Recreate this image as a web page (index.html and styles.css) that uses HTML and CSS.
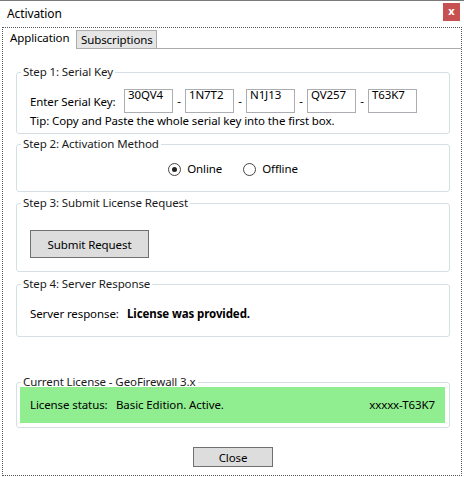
FILE: index.html
```html
<!DOCTYPE html>
<html>
<head>
<meta charset="utf-8">
<link rel="stylesheet" href="styles.css">
</head>
<body>
<div class="window">
  <div class="titlebar">
    <span class="title">Activation</span>
    <span class="close">x</span>
  </div>
  <div class="tabctl">
    <div class="tabs">
      <div class="tab active">Application</div>
      <div class="tab inactive">Subscriptions</div>
      <div class="tabfill"></div>
    </div>
    <div class="panel">
      <fieldset class="group g1">
        <legend>Step 1: Serial Key</legend>
        <div class="body b1">
          <div class="keyrow">
            <span class="keylabel">Enter Serial Key:</span>
            <span class="keybox">30QV4</span><span class="dash">-</span>
            <span class="keybox">1N7T2</span><span class="dash">-</span>
            <span class="keybox">N1J13</span><span class="dash">-</span>
            <span class="keybox">QV257</span><span class="dash">-</span>
            <span class="keybox">T63K7</span>
          </div>
          <div class="line">Tip: Copy and Paste the whole serial key into the first box.</div>
        </div>
      </fieldset>
      <fieldset class="group g2">
        <legend>Step 2: Activation Method</legend>
        <div class="body b2">
          <div class="radios">
            <span class="radio"><span class="circle checked"><span class="dot"></span></span>Online</span>
            <span class="radio"><span class="circle"></span>Offline</span>
          </div>
        </div>
      </fieldset>
      <fieldset class="group g3">
        <legend>Step 3: Submit License Request</legend>
        <div class="body b3">
          <button class="btn submit">Submit Request</button>
        </div>
      </fieldset>
      <fieldset class="group g4">
        <legend>Step 4: Server Response</legend>
        <div class="body b4">
          <div class="line"><span class="resp-label">Server response:</span><b class="resp">License was provided.</b></div>
        </div>
      </fieldset>
      <fieldset class="group g5">
        <legend>Current License - GeoFirewall 3.x</legend>
        <div class="body b5">
          <div class="status">
            <span class="status-label">License status:</span>
            <span class="status-value">Basic Edition. Active.</span>
            <span class="status-key">xxxxx-T63K7</span>
          </div>
        </div>
      </fieldset>
      <div class="footer">
        <button class="btn closebtn">Close</button>
      </div>
    </div>
  </div>
</div>
</body>
</html>
```
FILE: styles.css
```css
* { box-sizing: border-box; }
html, body { margin: 0; padding: 0; background: #fff; }
body {
  font-family: "Noto Sans", "Open Sans", sans-serif;
  font-size: 11.5px;
  letter-spacing: -0.1px;
  line-height: 16px;
  color: #000;
}
.window {
  width: 464px;
  height: 477px;
  border-top: 1px solid #7a7a7a;
  display: flex;
  flex-direction: column;
  background: #fff;
  overflow: hidden;
}
.titlebar {
  height: 26px;
  flex: none;
  display: flex;
  justify-content: space-between;
  align-items: flex-start;
  padding: 0 4px 0 7px;
}
.title { margin-top: 5px; font-size: 12px; }
.close {
  margin-top: 2px;
  width: 17px;
  height: 18px;
  background: #c75050;
  color: #fff;
  font-weight: bold;
  font-size: 11px;
  line-height: 16px;
  text-align: center;
}
.tabctl {
  flex: 1;
  margin: 0 2px 1px 2px;
  border: 1px dotted #555;
  display: flex;
  flex-direction: column;
}
.tabs {
  height: 21px;
  flex: none;
  display: flex;
  align-items: flex-end;
}
.tab {
  height: 21px;
  line-height: 20px;
  white-space: nowrap;
}
.tab.active {
  width: 73px;
  padding-left: 7px;
  background: #fff;
}
.tab.inactive {
  width: 81px;
  height: 19px;
  line-height: 17px;
  padding-left: 4px;
  background: #e5e5e5;
  border: 1px solid #acacac;
}
.tabfill {
  flex: 1;
  height: 1px;
  background: #acacac;
}
.panel {
  flex: 1;
  display: flex;
  flex-direction: column;
  padding: 15px 11px 0 13px;
}
.group {
  margin: 0;
  padding: 0;
  min-width: 0;
  border: 1px solid #d5dfe5;
  border-radius: 3px;
}
.group legend {
  margin-left: 4px;
  padding: 0 2px;
  line-height: 16px;
  color: #1a1a1a;
}
.g2 { margin-top: 2px; }
.g3 { margin-top: 3px; }
.g4 { margin-top: 4px; }
.g5 { margin-top: 37px; }
.body { padding-left: 13px; }
.b1 { padding-top: 9px; padding-bottom: 4px; }
.b2 { padding-top: 9px; padding-bottom: 14px; padding-left: 0; }
.b3 { padding-top: 19px; padding-bottom: 13px; }
.b4 { padding-top: 14px; padding-bottom: 14px; }
.b5 { padding: 0 4px 4px 3px; margin-top: -3px; }
.keyrow {
  display: flex;
  align-items: center;
  height: 24px;
}
.keylabel { width: 94px; padding-top: 1px; }
.keybox {
  width: 49px;
  height: 24px;
  border: 1px solid #abadb3;
  padding: 0 3px;
  line-height: 10px;
}
.dash {
  width: 12px;
  text-align: center;
}
.line { height: 16px; white-space: nowrap; }
.radios {
  display: flex;
  justify-content: center;
  gap: 21px;
  height: 16px;
  align-items: center;
}
.radio {
  display: flex;
  align-items: center;
  gap: 6px;
}
.circle {
  width: 13px;
  height: 13px;
  border: 1px solid #444;
  border-radius: 50%;
  background: #fff;
  display: flex;
  align-items: center;
  justify-content: center;
}
.dot {
  width: 5px;
  height: 5px;
  border-radius: 50%;
  background: #222;
}
.btn {
  font-family: inherit;
  font-size: 11.5px;
  letter-spacing: -0.1px;
  color: #000;
  background: #dddddd;
  border: 1px solid #707070;
  border-radius: 0;
  padding: 0;
  margin: 0;
}
.submit { width: 119px; height: 28px; display: block; }
.resp-label { display: inline-block; width: 97px; }
.resp { font-weight: bold; }
.status {
  height: 36px;
  background: #90ee90;
  display: flex;
  align-items: center;
  padding: 0 10px;
}
.status-label { width: 86px; }
.status-value { flex: 1; }
.footer {
  display: flex;
  justify-content: center;
  margin-top: 19px;
}
.closebtn { width: 80px; height: 20px; }
```
